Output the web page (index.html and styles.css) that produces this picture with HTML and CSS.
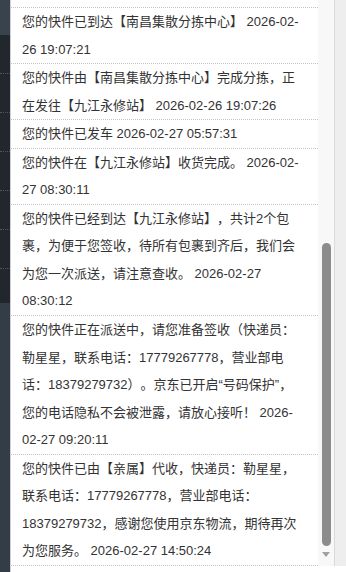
FILE: index.html
```html
<!DOCTYPE html>
<html lang="zh-CN">
<head>
  <meta charset="UTF-8" />
  <meta name="viewport" content="width=device-width, initial-scale=1.0" />
  <title>物流跟踪</title>
  <link rel="stylesheet" href="styles.css">
</head>
<body>

<div class="page">
  <nav class="side">
    <div class="side-head"></div>
    <ul class="side-menu">
      <li></li>
      <li></li>
      <li></li>
      <li></li>
      <li></li>
      <li></li>
    </ul>
  </nav>

  <main class="main">
    <div class="box">
      <ul class="track">
        <li>您的快件已到达【南昌集散分拣中心】 2026-02-26 19:07:21</li>
        <li>您的快件由【南昌集散分拣中心】完成分拣，正在发往【九江永修站】 2026-02-26 19:07:26</li>
        <li>您的快件已发车 2026-02-27 05:57:31</li>
        <li>您的快件在【九江永修站】收货完成。 2026-02-27 08:30:11</li>
        <li>您的快件已经到达【九江永修站】，共计2个包裹，为便于您签收，待所有包裹到齐后，我们会为您一次派送，请注意查收。 2026-02-27 08:30:12</li>
        <li>您的快件正在派送中，请您准备签收（快递员：勒星星，联系电话：17779267778，营业部电话：18379279732）。京东已开启“号码保护”，您的电话隐私不会被泄露，请放心接听！ 2026-02-27 09:20:11</li>
        <li>您的快件已由【亲属】代收，快递员：勒星星，联系电话：17779267778，营业部电话：18379279732，感谢您使用京东物流，期待再次为您服务。 2026-02-27 14:50:24</li>
      </ul>
      <div class="scrollbar">
        <div class="thumb"></div>
        <div class="arrow"></div>
      </div>
      <div class="gutter"></div>
    </div>
  </main>
</div>

</body>
</html>
```

FILE: styles.css
```css
html, body {
  margin: 0;
  height: 100%;
}
body {
  font-family: "Liberation Sans", "Noto Sans CJK SC", sans-serif;
  font-size: 13px;
  color: #333;
  background: #fff;
  overflow: hidden;
}
.page {
  display: flex;
  height: 572px;
}

/* left menu strip */
.side {
  flex: none;
  width: 10px;
  background: #323d48;
  border-right: 1px solid #d0d0d0;
}
.side-head {
  height: 35px;
  background: #38434e;
}
.side-menu {
  margin: 0;
  padding: 0;
  list-style: none;
  height: 268px;
  background: #22272e;
}
.side-menu li {
  height: 38px;
  border-bottom: 1px dotted #50565e;
}

/* tracking list */
.main {
  flex: 1;
  background: #fff;
}
.box {
  display: flex;
  height: 566px;
}
.track {
  flex: none;
  width: 307px;
  margin: 0;
  padding: 7px 0 0;
  list-style: none;
  overflow: hidden;
  text-spacing-trim: space-all;
}
.track li {
  padding: 0 15px 0 11px;
  line-height: 27.55px;
  border-top: 1px dotted #c4c4c4;
}
.track li:last-child {
  border-bottom: 1px dotted #c4c4c4;
}

/* scrollbar look */
.scrollbar {
  flex: none;
  width: 16px;
  background: #f8f8f8;
  display: flex;
  flex-direction: column;
  align-items: flex-start;
  padding-top: 243px;
  box-sizing: border-box;
}
.thumb {
  width: 9px;
  height: 303px;
  margin-left: 4px;
  border-radius: 5px;
  background: #8c8c8c;
}
.arrow {
  width: 0;
  height: 0;
  margin: 6px 0 0 4px;
  border-left: 4px solid transparent;
  border-right: 4px solid transparent;
  border-top: 5px solid #a0a0a0;
}
.gutter {
  flex: 1;
  border-left: 1px solid #dadada;
  background: #eee;
}
```
